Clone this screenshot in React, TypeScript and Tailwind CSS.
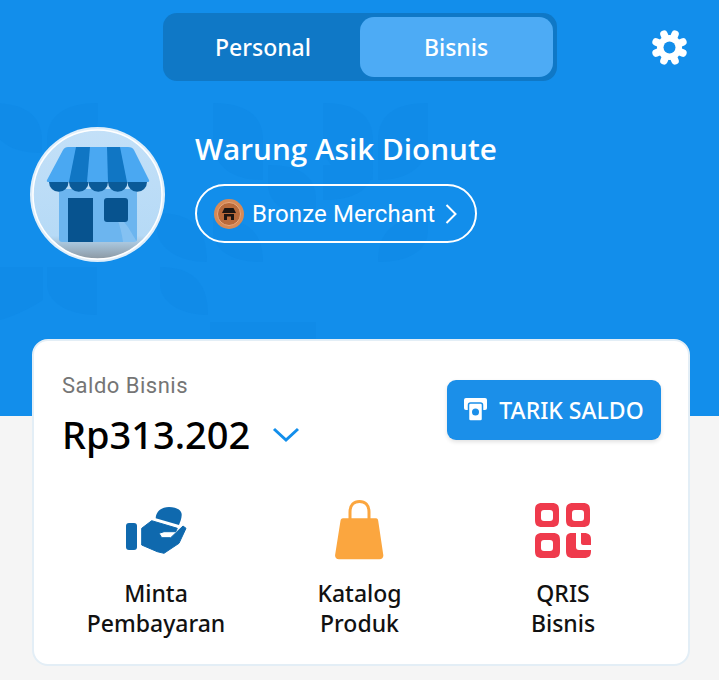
const sans = "font-['Noto_Sans','Open_Sans',sans-serif]";

const leaves = [
  "M-8 103C24 103 42 115 42 140V153C10 153-8 140-8 118Z",
  "M98 103C66 103 47 115 47 140V153C80 153 98 140 98 118Z",
  "M213 103C245 103 263 115 263 140V180C230 180 213 165 213 140Z",
  "M323 103C355 103 373 115 373 140V180C340 180 323 165 323 140Z",
  "M428 103C395 103 378 115 378 140V180C410 180 428 165 428 140Z",
  "M268 165C300 165 316 176 316 200V218C290 218 268 204 268 185Z",
  "M323 165H373C373 190 355 200 323 200Z",
  "M213 218C245 218 263 230 263 262C230 262 213 250 213 230Z",
  "M428 218C395 218 378 230 378 262C410 262 428 250 428 230Z",
  "M157 213C190 213 207 226 207 262C175 262 157 245 157 230Z",
  "M160 267C190 267 208 280 208 315C178 315 160 300 160 285Z",
  "M0 267H43V300C20 315 0 320 0 320Z",
  "M47 267H97V315C65 315 47 300 47 285Z",
  "M210 322H316V339H210Z",
];

function LeafPattern() {
  return (
    <svg className="absolute inset-0 h-full w-full" viewBox="0 0 719 416" fill="#108be8">
      {leaves.map((d) => (
        <path key={d} d={d} />
      ))}
    </svg>
  );
}

function StoreIcon() {
  return (
    <svg width="136" height="136" viewBox="0 0 136 136" className="block">
      <defs>
        <linearGradient id="avatarShade" x1="0" y1="0" x2="0" y2="1">
          <stop offset="0" stopColor="#c3e0f8" />
          <stop offset="0.82" stopColor="#b6daf6" />
          <stop offset="1" stopColor="#8b98a3" />
        </linearGradient>
      </defs>
      <circle cx="67.500" cy="67.500" r="67.500" fill="#dfeefa" />
      <circle cx="67.500" cy="67.500" r="64.500" fill="url(#avatarShade)" stroke="#ffffff" strokeWidth="1.500" />
      <path d="M29 62h78v50a3 3 0 0 1-3 3H32a3 3 0 0 1-3-3z" fill="#6cb5ef" />
      <path d="M74 70l24 30 9 15H93c-2-17-8-32-19-45z" fill="#9ccdf5" opacity="0.5" />
      <path d="M38 71h25v44H38z" fill="#07538f" />
      <rect x="74" y="71" width="24" height="24" rx="3" fill="#07538f" />
      <path d="M38 20h60c3 0 5 1 6 3l15 30c.5 1 0 2-1 2H18c-1 0-1.500-1-1-2l16-30c1-2 3-3 5-3z" fill="#4aa8f2" />
      <path d="M46 20h14l-3 35H39z" fill="#1076c4" />
      <path d="M77 20h13l7 35H78z" fill="#1076c4" />
      <g fill="#0a5a98">
        <path d="M19 55h19.500a9.750 9.750 0 0 1-19.500 0z" />
        <path d="M39 55h19.500a9.750 9.750 0 0 1-19.500 0z" />
        <path d="M58.500 55h19.500a9.750 9.750 0 0 1-19.500 0z" />
        <path d="M78 55h19.500a9.750 9.750 0 0 1-19.500 0z" />
        <path d="M97.500 55h19.500a9.750 9.750 0 0 1-19.500 0z" />
      </g>
    </svg>
  );
}

function BronzeBadge() {
  return (
    <svg width="30" height="30" viewBox="0 0 30 30">
      <circle cx="15" cy="15" r="15" fill="#d78a56" />
      <circle cx="15" cy="15" r="11.500" fill="#b96a3b" stroke="#e8a97f" strokeWidth="1" />
      <path d="M10.500 9h9l2.500 5H8z" fill="#1d1512" />
      <path d="M10 15h10v6h-3v-3.500h-4V21h-3z" fill="#1d1512" />
    </svg>
  );
}

function Gear() {
  const teeth = [0, 45, 90, 135];
  return (
    <svg width="37" height="37" viewBox="0 0 37 37">
      <circle cx="18.500" cy="18.500" r="12.500" fill="#ffffff" />
      {teeth.map((t) => (
        <line
          key={t}
          x1="18.500"
          y1="4"
          x2="18.500"
          y2="33"
          stroke="#ffffff"
          strokeWidth="7.500"
          strokeLinecap="round"
          transform={`rotate(${t + 22.5} 18.500 18.500)`}
        />
      ))}
      <circle cx="18.500" cy="18.500" r="6" fill="#128eeb" />
    </svg>
  );
}

function WithdrawIcon() {
  return (
    <svg width="23" height="24" viewBox="0 0 23 24">
      <path d="M2 0h19a2 2 0 0 1 2 2v8a2 2 0 0 1-2 2H2a2 2 0 0 1-2-2V2a2 2 0 0 1 2-2z" fill="#ffffff" />
      <rect x="4.500" y="5" width="14" height="18" rx="2" fill="#ffffff" stroke="#1b8fe9" strokeWidth="1.500" />
      <circle cx="11.500" cy="14" r="3.500" fill="#1b8fe9" />
    </svg>
  );
}

function HandIcon() {
  return (
    <svg width="61" height="47" viewBox="0 0 61 47" fill="#0f69ae">
      <rect x="0" y="16" width="11" height="27" rx="3" />
      <path d="M29.700 11.300C30 4 36 0 43 0C50 0 56 3 55.700 8C55.600 12 54 15 53 18Z" />
      <path d="M15.700 21.300L25.700 13.700L51.300 21.300L49.700 24.700H38L33 26.300L35.700 30.700H44.700L57 19L60 21.300L53 36.300L38 46.300L31.300 44.700L15.700 38Z" strokeLinejoin="round" stroke="#0f69ae" strokeWidth="1" />
    </svg>
  );
}

function BagIcon() {
  return (
    <svg width="49" height="60" viewBox="0 0 49 60">
      <path d="M15 24V12C15 5 19 1.500 24.500 1.500S34 5 34 12v12" fill="none" stroke="#fba63f" strokeWidth="3" />
      <path d="M8 18.300h33c1.500 0 2 1 2.200 2.500L48.300 55c.3 2.500-1.300 4.300-3.800 4.300H4c-2.500 0-4.200-1.800-3.900-4.300L5.500 20.800c.2-1.500 1-2.500 2.500-2.500z" fill="#fba63f" />
    </svg>
  );
}

function QrIcon() {
  const hole = "M9 7h6c2 0 3 1 3 3v5c0 2-1 3-3 3H9c-2 0-3-1-3-3v-5c0-2 1-3 3-3z";
  return (
    <svg width="56" height="55" viewBox="0 0 56 55" fill="#ef3a4c">
      <g fillRule="evenodd">
        <path d={`M7 0h10c5 0 7 2 7 7v10c0 5-2 7-7 7H7c-5 0-7-2-7-7V7c0-5 2-7 7-7z${hole}`} />
        <path transform="translate(31 0)" d={`M7 0h10c5 0 7 2 7 7v10c0 5-2 7-7 7H7c-5 0-7-2-7-7V7c0-5 2-7 7-7z${hole}`} />
        <path transform="translate(0 30)" d={`M7 0h11c5 0 7 2 7 7v11c0 5-2 7-7 7H7c-5 0-7-2-7-7V7c0-5 2-7 7-7z${hole}`} />
      </g>
      <path d="M37 30h4v14c0 2 1 3 3 3h12v1c0 5-2 7-7 7H38c-5 0-7-2-7-7V37c0-5 1-7 6-7z" />
      <path d="M46 30h3c5 0 7 2 7 7v5h-8c-1 0-2-1-2-2z" />
    </svg>
  );
}

const actions = [
  { icon: <HandIcon />, lines: ["Minta", "Pembayaran"] },
  { icon: <BagIcon />, lines: ["Katalog", "Produk"] },
  { icon: <QrIcon />, lines: ["QRIS", "Bisnis"] },
];

export default function App() {
  return (
    <div className={`relative h-[680px] w-[719px] overflow-hidden bg-[#f5f5f5] ${sans}`}>
      <div className="relative h-[416px] bg-[#128eeb]">
        <LeafPattern />
        <div className="relative flex justify-center pt-[13px]">
          <div className="flex h-[68px] w-[394px] rounded-[14px] bg-[#0f78c6] p-1">
            <div className="flex w-[193px] items-center justify-center text-[23px] font-medium text-white">Personal</div>
            <div className="flex flex-1 items-center justify-center rounded-[14px] bg-[#4dabf5] text-[23px] font-medium text-white">Bisnis</div>
          </div>
          <div className="absolute right-[31px] top-[29px]">
            <Gear />
          </div>
        </div>
        <div className="relative flex pl-[30px] pt-[46px]">
          <StoreIcon />
          <div className="ml-[29px] pt-[3px]">
            <div className="font-['Open_Sans',sans-serif] text-[29.7px] font-semibold leading-[38px] text-white">Warung Asik Dionute</div>
            <div className="mt-[16px] flex h-[59px] w-[282px] items-center rounded-full border-2 border-white pl-[17px] font-['Roboto',sans-serif] text-[24px] tracking-[0.1px] text-white">
              <BronzeBadge />
              <span className="ml-[8px]">Bronze Merchant</span>
              <svg className="ml-[10px]" width="12" height="20" viewBox="0 0 12 20" fill="none" stroke="#ffffff" strokeWidth="2">
                <path d="M1.500 1l9 9-9 9" />
              </svg>
            </div>
          </div>
        </div>
      </div>

      <div className="absolute left-[32px] top-[339px] h-[327px] w-[658px] rounded-[16px] border-2 border-[#e3eef6] bg-white">
        <div className="flex justify-between pl-[28px] pr-[27px]">
          <div className="pt-[32px]">
            <div className="font-['Roboto',sans-serif] text-[22px] leading-[26px] tracking-[0.5px] text-[#757575]">Saldo Bisnis</div>
            <div className="mt-[12px] flex items-center">
              <span className="text-[38px] font-medium leading-[46px] text-black">Rp313.202</span>
              <svg className="ml-[22px] mt-[2px]" width="28" height="16" viewBox="0 0 28 16" fill="none" stroke="#128eeb" strokeWidth="3">
                <path d="M2 2l12 11L26 2" />
              </svg>
            </div>
          </div>
          <div className="mt-[39px] flex h-[60px] w-[214px] items-center justify-center rounded-[9px] bg-[#1b8fe9] text-[23px] font-medium text-white shadow-[0_2px_4px_rgba(0,0,0,0.12)]">
            <WithdrawIcon />
            <span className="ml-[12px]">TARIK SALDO</span>
          </div>
        </div>
        <div className="mt-[42px] grid grid-cols-[244px_163px_244px]">
          {actions.map((a) => (
            <div key={a.lines[0]} className="flex flex-col items-center">
              <div className="flex h-[62px] items-center justify-center">{a.icon}</div>
              <div className="mt-[17px] text-center text-[23px] font-medium leading-[30px] text-[#111]">
                {a.lines.map((l) => (
                  <div key={l}>{l}</div>
                ))}
              </div>
            </div>
          ))}
        </div>
      </div>
    </div>
  );
}
